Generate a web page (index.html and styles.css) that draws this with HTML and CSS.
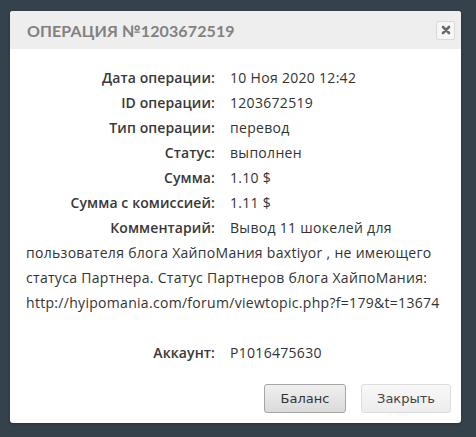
FILE: index.html
```html
<!DOCTYPE html>
<html lang="ru">
<head>
<meta charset="utf-8">
<title>Операция</title>
<link rel="stylesheet" href="styles.css">
</head>
<body>
<div class="modal">
  <div class="modal-header">
    <h1 class="modal-title">Операция №1203672519</h1>
    <button class="close-btn" type="button" aria-label="Закрыть">
      <svg width="10" height="10" viewBox="0 0 10 10"><path d="M2 2L8 8M8 2L2 8" stroke="#6a6a6a" stroke-width="2.6" stroke-linecap="round"/></svg>
    </button>
  </div>
  <div class="modal-body">
    <div class="row"><span class="label">Дата операции:</span><span class="value">10 Ноя 2020 12:42</span></div>
    <div class="row"><span class="label">ID операции:</span><span class="value">1203672519</span></div>
    <div class="row"><span class="label">Тип операции:</span><span class="value">перевод</span></div>
    <div class="row"><span class="label">Статус:</span><span class="value">выполнен</span></div>
    <div class="row"><span class="label">Сумма:</span><span class="value">1.10 $</span></div>
    <div class="row"><span class="label">Сумма с комиссией:</span><span class="value">1.11 $</span></div>
    <p class="comment"><span class="label float">Комментарий:</span>Вывод 11 шокелей для пользователя блога ХайпоМания baxtiyor , не имеющего статуса Партнера. Статус Партнеров блога ХайпоМания: http://hyipomania.com/forum/viewtopic.php?f=179&amp;t=13674</p>
    <div class="row spacer"></div>
    <div class="row"><span class="label">Аккаунт:</span><span class="value">P1016475630</span></div>
  </div>
  <div class="modal-footer">
    <button class="btn btn-active" type="button">Баланс</button>
    <button class="btn btn-close" type="button">Закрыть</button>
  </div>
</div>
</body>
</html>
```

FILE: styles.css
```css
html, body {
  margin: 0;
  padding: 0;
}
body {
  background: #36424b;
  width: 476px;
  height: 437px;
  padding: 11px 0 0 10px;
  box-sizing: border-box;
  font-family: "Open Sans", sans-serif;
}
.modal {
  width: 451px;
  height: 412px;
  background: #fff;
  border-radius: 3px;
  display: flex;
  flex-direction: column;
  box-shadow: 0 1px 3px rgba(0,0,0,0.3);
}
.modal-header {
  height: 38px;
  background: #eeeeee;
  border-radius: 3px 3px 0 0;
  display: flex;
  align-items: center;
  justify-content: space-between;
  padding: 0 6px 0 17px;
}
.modal-title {
  margin: 0;
  font-family: "Lato", sans-serif;
  font-size: 16px;
  font-weight: 700;
  letter-spacing: 0.1px;
  text-transform: uppercase;
  color: #818181;
}
.close-btn {
  width: 19px;
  height: 19px;
  padding: 0;
  border: 1px solid #d9d9d9;
  border-radius: 2px;
  background: #f6f6f6;
  display: flex;
  align-items: center;
  justify-content: center;
}
.modal-body {
  padding: 16px 16px 0 16px;
  font-size: 14px;
  letter-spacing: 0.3px;
  color: #333;
  line-height: 25px;
}
.row {
  display: flex;
  height: 25px;
}
.label {
  width: 189px;
  text-align: right;
  font-weight: 600;
  color: #383838;
  margin-right: 15px;
  flex-shrink: 0;
  letter-spacing: 0.1px;
}
.label.float {
  float: left;
  height: 25px;
}
.comment {
  margin: 0;
}
.modal-footer {
  display: flex;
  justify-content: flex-end;
  gap: 15px;
  padding: 19px 10px 0 0;
}
.btn {
  height: 29px;
  padding: 0;
  font-family: "DejaVu Sans", sans-serif;
  font-size: 13px;
  color: #333;
  border: 1px solid #dcdcdc;
  border-radius: 3px;
  background: linear-gradient(#f8f8f8, #ededed);
}
.btn-active {
  width: 82px;
  border-color: #a6a6a6;
  background: linear-gradient(#f0f0f0, #dadada);
}
.btn-close {
  width: 90px;
  color: #444;
}
```
